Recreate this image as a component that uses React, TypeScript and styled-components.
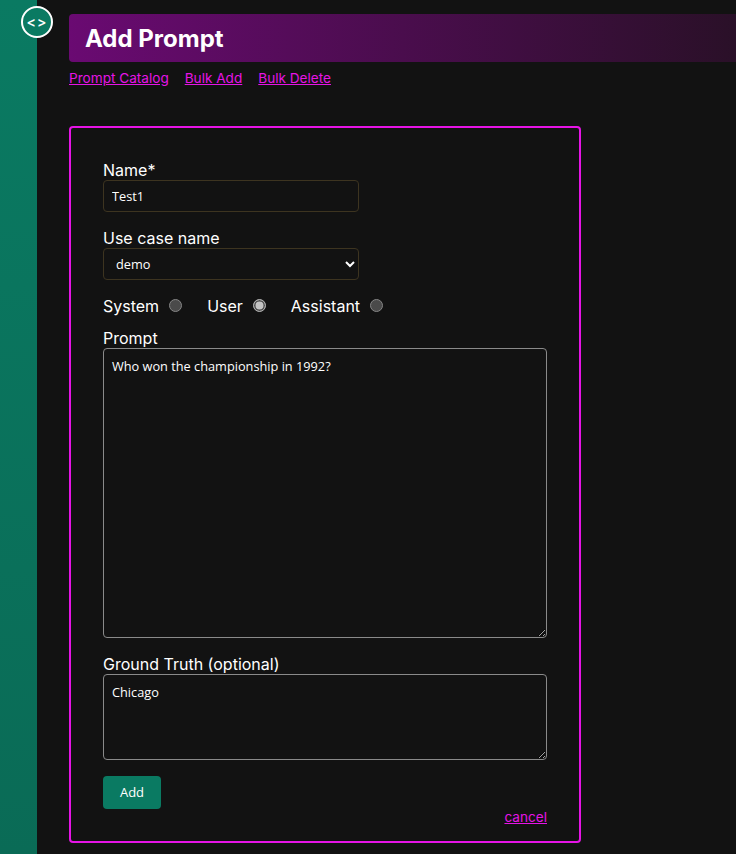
import * as React from 'react'
import styled, { createGlobalStyle } from 'styled-components'

const GlobalStyle = createGlobalStyle`
  html, body {
    background: #121212;
    color: #fff;
    color-scheme: dark;
    font-family: Inter, 'Liberation Sans', sans-serif;
    height: 100%;
    margin: 0;
  }
`

const Page = styled.div`
  display: flex;
  height: 854px;
  overflow: hidden;
  position: relative;
`

const Sidebar = styled.aside`
  background: linear-gradient(180deg, #0a7a62 0%, #0a6b56 100%);
  flex: none;
  width: 37px;
`

const Toggle = styled.button`
  align-items: center;
  background: #0a7a62;
  border: 2px solid #fff;
  border-radius: 50%;
  box-sizing: border-box;
  color: #fff;
  display: flex;
  font-family: Inter, sans-serif;
  font-size: 14px;
  font-weight: 600;
  height: 32px;
  justify-content: center;
  left: 21px;
  letter-spacing: 1px;
  line-height: 1;
  padding: 0;
  position: absolute;
  top: 6px;
  width: 32px;
`

const Main = styled.main`
  display: flex;
  flex: 1;
  flex-direction: column;
  min-width: 0;
  padding: 14px 0 0 32px;
`

const Header = styled.header`
  align-items: center;
  background: linear-gradient(90deg, #6a0a72 0%, #2a1028 100%);
  border-radius: 4px 0 0 4px;
  display: flex;
  height: 48px;
  padding-left: 16px;
`

const Title = styled.h1`
  font-size: 24px;
  font-weight: 700;
  margin: 0;
`

const Nav = styled.nav`
  display: flex;
  gap: 16px;
  margin-top: 8px;
`

const Link = styled.a`
  color: #e614e6;
  font-size: 13.6px;
  line-height: 16px;
  text-decoration: underline;
`

const Card = styled.form`
  border: 2px solid #e614e6;
  border-radius: 4px;
  box-sizing: border-box;
  display: flex;
  flex-direction: column;
  height: 717px;
  margin-top: 40px;
  padding: 32px;
  width: 512px;
`

const Label = styled.label`
  display: block;
  font-size: 16px;
  line-height: 20px;
`

const Field = styled.div<{ $gap?: number }>`
  margin-bottom: ${(p) => p.$gap ?? 0}px;
`

const TextInput = styled.input`
  background: transparent;
  border: 1px solid #3d3420;
  border-radius: 4px;
  box-sizing: border-box;
  color: #fff;
  display: block;
  font-family: 'Open Sans', sans-serif;
  font-size: 12.75px;
  height: 32px;
  outline: none;
  padding: 0 8px;
  width: 256px;
`

const Select = styled.select`
  background: transparent;
  border: 1px solid #3d3420;
  border-radius: 4px;
  box-sizing: border-box;
  color: #fff;
  display: block;
  font-family: 'Open Sans', sans-serif;
  font-size: 12.75px;
  height: 32px;
  padding: 0 8px;
  width: 256px;
`

const RadioRow = styled.div`
  align-items: center;
  display: flex;
  gap: 25px;
  height: 20px;
  margin: 16px 0 12px;
`

const RadioLabel = styled.label`
  align-items: center;
  display: flex;
  font-size: 16px;
  gap: 10px;
`

const Radio = styled.input`
  appearance: none;
  background: #4a4a4a;
  border: 1px solid #858585;
  border-radius: 50%;
  box-sizing: border-box;
  height: 13px;
  margin: -1px 0 0;
  width: 13px;

  &:checked {
    background: #c4c4c4;
    border-color: #b0b0b0;
    box-shadow: inset 0 0 0 1.5px #4a4a4a;
  }
`

const TextArea = styled.textarea<{ $height: number }>`
  background: transparent;
  border: 1px solid #8a8a8a;
  border-radius: 4px;
  box-sizing: border-box;
  color: #fff;
  display: block;
  font-family: 'Open Sans', sans-serif;
  font-size: 12.75px;
  height: ${(p) => p.$height}px;
  outline: none;
  padding: 8px;
  width: 444px;
`

const Footer = styled.div`
  display: flex;
  flex-direction: column;
`

const AddButton = styled.button`
  background: #0a7a62;
  border: none;
  border-radius: 4px;
  color: #fff;
  font-family: 'Open Sans', sans-serif;
  font-size: 13px;
  font-weight: 500;
  height: 33px;
  padding: 0 0 2px;
  width: 58px;
`

const Cancel = styled(Link)`
  align-self: flex-end;
`

export default function App() {
  return (
    <Page>
      <GlobalStyle />
      <Sidebar />
      <Toggle type="button" aria-label="toggle sidebar">
        {'<>'}
      </Toggle>
      <Main>
        <Header>
          <Title>Add Prompt</Title>
        </Header>
        <Nav>
          <Link href="#">Prompt Catalog</Link>
          <Link href="#">Bulk Add</Link>
          <Link href="#">Bulk Delete</Link>
        </Nav>
        <Card onSubmit={(e) => e.preventDefault()}>
          <Field $gap={16}>
            <Label>Name*</Label>
            <TextInput defaultValue="Test1" />
          </Field>
          <Field>
            <Label>Use case name</Label>
            <Select defaultValue="demo">
              <option value="demo">demo</option>
            </Select>
          </Field>
          <RadioRow>
            <RadioLabel>
              System <Radio type="radio" name="role" />
            </RadioLabel>
            <RadioLabel>
              User <Radio type="radio" name="role" defaultChecked />
            </RadioLabel>
            <RadioLabel>
              Assistant <Radio type="radio" name="role" />
            </RadioLabel>
          </RadioRow>
          <Field $gap={16}>
            <Label>Prompt</Label>
            <TextArea $height={290} defaultValue="Who won the championship in 1992?" />
          </Field>
          <Field $gap={16}>
            <Label>Ground Truth (optional)</Label>
            <TextArea $height={86} defaultValue="Chicago" />
          </Field>
          <Footer>
            <div>
              <AddButton type="submit">Add</AddButton>
            </div>
            <Cancel href="#">cancel</Cancel>
          </Footer>
        </Card>
      </Main>
    </Page>
  )
}
